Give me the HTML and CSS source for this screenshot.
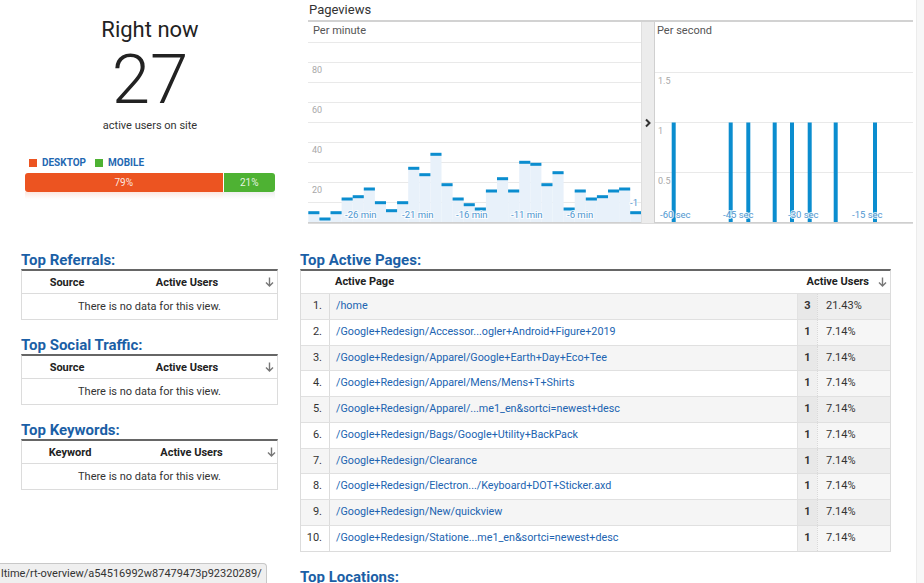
FILE: index.html
```html
<!DOCTYPE html>
<html lang="en">
<head>
<meta charset="utf-8">
<title>Real-Time Overview</title>
<link rel="stylesheet" href="styles.css">
</head>
<body>
<div class="app">
  <div class="main">
    <div class="top">
      <section class="now">
        <div class="now-title">Right now</div>
        <div class="now-count">27</div>
        <div class="now-sub">active users on site</div>
        <div class="legend">
          <span class="legend-item"><span class="sw sw-desktop"></span>DESKTOP</span>
          <span class="legend-item"><span class="sw sw-mobile"></span>MOBILE</span>
        </div>
        <div class="device-bar">
          <div class="seg seg-desktop">79%</div>
          <div class="seg seg-mobile">21%</div>
        </div>
        <div class="device-reflect">
          <div class="ref ref-desktop"></div>
          <div class="ref ref-mobile"></div>
        </div>
      </section>

      <section class="chart">
        <div class="chart-title">Pageviews</div>
        <div class="chart-frame">
          <div class="pm">
            <svg width="333" height="201" viewBox="0 0 333 201">
              <text class="plabel" x="5" y="12">Per minute</text>
              <g class="grid">
                <line x1="0" x2="333" y1="20.5" y2="20.5"/>
                <line x1="0" x2="333" y1="40.5" y2="40.5"/>
                <line x1="0" x2="333" y1="60.5" y2="60.5"/>
                <line x1="0" x2="333" y1="80.5" y2="80.5"/>
                <line x1="0" x2="333" y1="100.5" y2="100.5"/>
                <line x1="0" x2="333" y1="120.5" y2="120.5"/>
                <line x1="0" x2="333" y1="140.5" y2="140.5"/>
                <line x1="0" x2="333" y1="160.5" y2="160.5"/>
                <line x1="0" x2="333" y1="180.5" y2="180.5"/>
              </g>
              <text class="ylab" x="4" y="51">80</text>
              <text class="ylab" x="4" y="91">60</text>
              <text class="ylab" x="4" y="131">40</text>
              <text class="ylab" x="4" y="171">20</text>
              <g class="area">
                <rect x="0.3" y="190.7" width="11.1" height="9.8"/>
                <rect x="11.4" y="197" width="11.1" height="3.5"/>
                <rect x="22.5" y="190.7" width="11.1" height="9.8"/>
                <rect x="33.6" y="177" width="11.1" height="23.5"/>
                <rect x="44.7" y="174.7" width="11.1" height="25.8"/>
                <rect x="55.8" y="167" width="11.1" height="33.5"/>
                <rect x="66.9" y="180.7" width="11.1" height="19.8"/>
                <rect x="78" y="188.7" width="11.1" height="11.8"/>
                <rect x="89.1" y="180.7" width="11.1" height="19.8"/>
                <rect x="100.2" y="146.3" width="11.1" height="54.2"/>
                <rect x="111.3" y="152.7" width="11.1" height="47.8"/>
                <rect x="122.4" y="132.3" width="11.1" height="68.2"/>
                <rect x="133.5" y="162.7" width="11.1" height="37.8"/>
                <rect x="144.6" y="177" width="11.1" height="23.5"/>
                <rect x="155.7" y="182.7" width="11.1" height="17.8"/>
                <rect x="166.8" y="187" width="11.1" height="13.5"/>
                <rect x="177.9" y="169" width="11.1" height="31.5"/>
                <rect x="189" y="156.7" width="11.1" height="43.8"/>
                <rect x="200.1" y="169" width="11.1" height="31.5"/>
                <rect x="211.2" y="140.3" width="11.1" height="60.2"/>
                <rect x="222.3" y="142.3" width="11.1" height="58.2"/>
                <rect x="233.4" y="162.7" width="11.1" height="37.8"/>
                <rect x="244.5" y="150.7" width="11.1" height="49.8"/>
                <rect x="255.6" y="187" width="11.1" height="13.5"/>
                <rect x="266.7" y="169" width="11.1" height="31.5"/>
                <rect x="277.8" y="177" width="11.1" height="23.5"/>
                <rect x="288.9" y="174.7" width="11.1" height="25.8"/>
                <rect x="300" y="169" width="11.1" height="31.5"/>
                <rect x="311.1" y="167" width="11.1" height="33.5"/>
                <rect x="322.2" y="190.7" width="10.8" height="9.8"/>
              </g>
              <g class="tops">
                <rect x="0.3" y="189.2" width="11.1" height="3"/>
                <rect x="11.4" y="195.5" width="11.1" height="3"/>
                <rect x="22.5" y="189.2" width="11.1" height="3"/>
                <rect x="33.6" y="175.5" width="11.1" height="3"/>
                <rect x="44.7" y="173.2" width="11.1" height="3"/>
                <rect x="55.8" y="165.5" width="11.1" height="3"/>
                <rect x="66.9" y="179.2" width="11.1" height="3"/>
                <rect x="78" y="187.2" width="11.1" height="3"/>
                <rect x="89.1" y="179.2" width="11.1" height="3"/>
                <rect x="100.2" y="144.8" width="11.1" height="3"/>
                <rect x="111.3" y="151.2" width="11.1" height="3"/>
                <rect x="122.4" y="130.8" width="11.1" height="3"/>
                <rect x="133.5" y="161.2" width="11.1" height="3"/>
                <rect x="144.6" y="175.5" width="11.1" height="3"/>
                <rect x="155.7" y="181.2" width="11.1" height="3"/>
                <rect x="166.8" y="185.5" width="11.1" height="3"/>
                <rect x="177.9" y="167.5" width="11.1" height="3"/>
                <rect x="189" y="155.2" width="11.1" height="3"/>
                <rect x="200.1" y="167.5" width="11.1" height="3"/>
                <rect x="211.2" y="138.8" width="11.1" height="3"/>
                <rect x="222.3" y="140.8" width="11.1" height="3"/>
                <rect x="233.4" y="161.2" width="11.1" height="3"/>
                <rect x="244.5" y="149.2" width="11.1" height="3"/>
                <rect x="255.6" y="185.5" width="11.1" height="3"/>
                <rect x="266.7" y="167.5" width="11.1" height="3"/>
                <rect x="277.8" y="175.5" width="11.1" height="3"/>
                <rect x="288.9" y="173.2" width="11.1" height="3"/>
                <rect x="300" y="167.5" width="11.1" height="3"/>
                <rect x="311.1" y="165.5" width="11.1" height="3"/>
                <rect x="322.2" y="189.2" width="10.8" height="3"/>
              </g>
              <line class="axis" x1="0" x2="333" y1="200.5" y2="200.5"/>
              <text class="xlab" x="37" y="195.5">-26 min</text>
              <text class="xlab" x="94" y="195.5">-21 min</text>
              <text class="xlab" x="148" y="195.5">-16 min</text>
              <text class="xlab" x="203" y="195.5">-11 min</text>
              <text class="xlab" x="259" y="195.5">-6 min</text>
              <text class="xlab" x="322" y="184">-1</text>
            </svg>
          </div>
          <div class="divider">
            <svg class="chev" width="8" height="10" viewBox="0 0 8 10"><path d="M2 1.5 L5.5 5 L2 8.5"/></svg>
          </div>
          <div class="ps">
            <svg width="258" height="201" viewBox="0 0 258 201">
              <text class="plabel" x="2" y="12">Per second</text>
              <g class="grid">
                <line x1="0" x2="258" y1="50.5" y2="50.5"/>
                <line x1="0" x2="258" y1="100.5" y2="100.5"/>
                <line x1="0" x2="258" y1="150.5" y2="150.5"/>
              </g>
              <text class="ylab" x="3" y="62">1.5</text>
              <text class="ylab" x="3" y="112">1</text>
              <text class="ylab" x="3" y="162">0.5</text>
              <g class="spikes">
                <rect x="16.7" y="100.5" width="4" height="100"/>
                <rect x="73.7" y="100.5" width="4" height="100"/>
                <rect x="91.3" y="100.5" width="4" height="100"/>
                <rect x="117.7" y="100.5" width="4" height="100"/>
                <rect x="135" y="100.5" width="4" height="100"/>
                <rect x="152.7" y="100.5" width="4" height="100"/>
                <rect x="178.7" y="100.5" width="4" height="100"/>
                <rect x="218" y="100.5" width="4" height="100"/>
              </g>
              <line class="axis" x1="0" x2="258" y1="200.5" y2="200.5"/>
              <text class="xlab" x="5" y="195.5">-60 sec</text>
              <text class="xlab" x="68" y="195.5">-45 sec</text>
              <text class="xlab" x="133" y="195.5">-30 sec</text>
              <text class="xlab" x="197" y="195.5">-15 sec</text>
            </svg>
          </div>
        </div>
      </section>
    </div>

    <div class="bottom">
      <div class="left-col">
        <section class="block">
          <h2 class="block-title">Top Referrals:</h2>
          <div class="mini">
            <div class="mini-head">
              <span>Source</span><span>Active Users</span>
              <svg class="sort" width="9" height="10" viewBox="0 0 9 10"><path d="M4.5 0.5 V9 M1 5.5 L4.5 9 L8 5.5"/></svg>
            </div>
            <div class="mini-empty">There is no data for this view.</div>
          </div>
        </section>
        <section class="block">
          <h2 class="block-title">Top Social Traffic:</h2>
          <div class="mini">
            <div class="mini-head">
              <span>Source</span><span>Active Users</span>
              <svg class="sort" width="9" height="10" viewBox="0 0 9 10"><path d="M4.5 0.5 V9 M1 5.5 L4.5 9 L8 5.5"/></svg>
            </div>
            <div class="mini-empty">There is no data for this view.</div>
          </div>
        </section>
        <section class="block">
          <h2 class="block-title">Top Keywords:</h2>
          <div class="mini">
            <div class="mini-head mini-head-kw">
              <span>Keyword</span><span>Active Users</span>
              <svg class="sort" width="9" height="10" viewBox="0 0 9 10"><path d="M4.5 0.5 V9 M1 5.5 L4.5 9 L8 5.5"/></svg>
            </div>
            <div class="mini-empty">There is no data for this view.</div>
          </div>
        </section>
      </div>

      <div class="right-col">
        <section class="block">
          <h2 class="block-title">Top Active Pages:</h2>
          <div class="pages">
            <div class="prow phead">
              <span class="c-num"></span>
              <span class="c-page">Active Page</span>
              <span class="c-users">Active Users
                <svg class="sort" width="9" height="10" viewBox="0 0 9 10"><path d="M4.5 0.5 V9 M1 5.5 L4.5 9 L8 5.5"/></svg>
              </span>
            </div>
            <div class="prow odd"><span class="c-num">1.</span><a class="c-page" href="#">/home</a><span class="c-cnt">3</span><span class="c-pct">21.43%</span></div>
            <div class="prow"><span class="c-num">2.</span><a class="c-page" href="#">/Google+Redesign/Accessor...ogler+Android+Figure+2019</a><span class="c-cnt">1</span><span class="c-pct">7.14%</span></div>
            <div class="prow odd"><span class="c-num">3.</span><a class="c-page" href="#">/Google+Redesign/Apparel/Google+Earth+Day+Eco+Tee</a><span class="c-cnt">1</span><span class="c-pct">7.14%</span></div>
            <div class="prow"><span class="c-num">4.</span><a class="c-page" href="#">/Google+Redesign/Apparel/Mens/Mens+T+Shirts</a><span class="c-cnt">1</span><span class="c-pct">7.14%</span></div>
            <div class="prow odd"><span class="c-num">5.</span><a class="c-page" href="#">/Google+Redesign/Apparel/...me1_en&amp;sortci=newest+desc</a><span class="c-cnt">1</span><span class="c-pct">7.14%</span></div>
            <div class="prow"><span class="c-num">6.</span><a class="c-page" href="#">/Google+Redesign/Bags/Google+Utility+BackPack</a><span class="c-cnt">1</span><span class="c-pct">7.14%</span></div>
            <div class="prow odd"><span class="c-num">7.</span><a class="c-page" href="#">/Google+Redesign/Clearance</a><span class="c-cnt">1</span><span class="c-pct">7.14%</span></div>
            <div class="prow"><span class="c-num">8.</span><a class="c-page" href="#">/Google+Redesign/Electron.../Keyboard+DOT+Sticker.axd</a><span class="c-cnt">1</span><span class="c-pct">7.14%</span></div>
            <div class="prow odd"><span class="c-num">9.</span><a class="c-page" href="#">/Google+Redesign/New/quickview</a><span class="c-cnt">1</span><span class="c-pct">7.14%</span></div>
            <div class="prow"><span class="c-num">10.</span><a class="c-page" href="#">/Google+Redesign/Statione...me1_en&amp;sortci=newest+desc</a><span class="c-cnt">1</span><span class="c-pct">7.14%</span></div>
          </div>
        </section>
        <section class="block">
          <h2 class="block-title">Top Locations:</h2>
        </section>
      </div>
    </div>
  </div>
  <div class="rail"></div>
</div>
<div class="statusbar">ltime/rt-overview/a54516992w87479473p92320289/</div>
</body>
</html>
```

FILE: styles.css
```css
html, body {
  margin: 0;
  padding: 0;
}
body {
  font-family: Roboto, "Liberation Sans", Arial, sans-serif;
  color: #333;
  background: #fff;
  overflow: hidden;
}
.app {
  display: flex;
  min-height: 100vh;
}
.main {
  flex: 1;
  min-width: 0;
}
.rail {
  width: 7px;
  background: #f7f7f7;
  border-left: 1px solid #ececec;
}

/* ---------- top ---------- */
.top {
  display: flex;
  height: 252px;
}
.now {
  width: 300px;
  box-sizing: border-box;
  padding-top: 17px;
  text-align: center;
}
.now-title {
  font-size: 22px;
  line-height: 26px;
  color: #222;
}
.now-count {
  font-size: 69px;
  line-height: 70px;
  font-weight: 300;
  color: #222;
  margin-top: 2px;
}
.now-sub {
  font-size: 11px;
  line-height: 14px;
  margin-top: 4px;
  color: #333;
}
.legend {
  display: flex;
  align-items: center;
  margin: 24px 0 0 29px;
  font-size: 10px;
  line-height: 12px;
  font-weight: 700;
  color: #1f68b2;
}
.legend-item {
  display: flex;
  align-items: center;
  margin-right: 9px;
}
.sw {
  width: 8px;
  height: 8px;
  margin-right: 5px;
}
.sw-desktop { background: #ec5421; }
.sw-mobile { background: #4eb233; }

.device-bar {
  display: flex;
  width: 250px;
  height: 19px;
  margin: 4px 0 0 25px;
  border-radius: 3px;
  overflow: hidden;
  font-size: 10px;
  line-height: 19px;
  color: rgba(255, 255, 255, 0.88);
}
.seg-desktop {
  width: 79%;
  background: #ec5421;
  border-right: 1px solid #fff;
}
.seg-mobile {
  flex: 1;
  background: #4eb233;
}
.device-reflect {
  display: flex;
  width: 250px;
  height: 7px;
  margin-left: 25px;
}
.ref-desktop {
  width: 79%;
  background: linear-gradient(to bottom, rgba(236, 84, 33, 0.14), rgba(236, 84, 33, 0));
}
.ref-mobile {
  flex: 1;
  background: linear-gradient(to bottom, rgba(120, 120, 120, 0.12), rgba(120, 120, 120, 0));
}

/* ---------- chart ---------- */
.chart {
  width: 605px;
  margin-left: 8px;
}
.chart-title {
  font-size: 13px;
  line-height: 16px;
  padding: 2px 0 0 1px;
  margin-bottom: 2px;
  color: #333;
}
.chart-frame {
  display: flex;
  height: 201px;
  border-top: 2px solid #d2d2d2;
  border-bottom: 1px solid #dcdcdc;
}
.pm { width: 333px; }
.ps { width: 258px; }
.pm svg, .ps svg { display: block; }
.divider {
  width: 14px;
  box-sizing: border-box;
  background: #ececec;
  border-left: 1px solid #dedede;
  border-right: 1px solid #d0d0d0;
  display: flex;
  justify-content: center;
  padding-top: 96px;
}
.chev path {
  fill: none;
  stroke: #333;
  stroke-width: 2;
}
.plabel {
  font-family: Roboto, "Liberation Sans", sans-serif;
  font-size: 11px;
  fill: #555;
}
.grid line {
  stroke: #e9e9e9;
  stroke-width: 1;
}
.axis {
  stroke: #cfcfcf;
  stroke-width: 1;
}
.ylab {
  font-family: Roboto, "Liberation Sans", sans-serif;
  font-size: 9px;
  fill: #a8a8a8;
}
.area rect { fill: #e8f1fa; }
.tops rect { fill: #0b8dcf; }
.spikes rect { fill: #0b8dcf; }
.xlab {
  font-family: Roboto, "Liberation Sans", sans-serif;
  font-size: 9.5px;
  fill: #4f97d1;
  stroke: #ffffff;
  stroke-width: 2px;
  stroke-opacity: 0.8;
  paint-order: stroke;
}

/* ---------- bottom ---------- */
.bottom {
  display: flex;
}
.left-col {
  width: 257px;
  margin-left: 21px;
}
.right-col {
  width: 591px;
  margin-left: 22px;
}
.block + .block {
  margin-top: 17px;
}
.block-title {
  margin: 0;
  font-size: 15px;
  line-height: 17px;
  font-weight: 700;
  color: #1b5fa6;
}
.mini {
  border: 1px solid #dcdcdc;
  border-top: 2px solid #666;
}
.mini-head {
  display: grid;
  grid-template-columns: 90px 150px 1fr;
  align-items: center;
  height: 22px;
  border-bottom: 1px solid #dcdcdc;
  font-size: 11px;
  font-weight: 700;
  color: #222;
  text-align: center;
}
.mini-head-kw {
  grid-template-columns: 96px 147px 1fr;
}
.mini-empty {
  height: 25px;
  line-height: 25px;
  text-align: center;
  font-size: 11px;
  color: #333;
}
.sort {
  display: block;
  justify-self: center;
}
.sort path {
  fill: none;
  stroke: #777;
  stroke-width: 1.4;
}

.pages {
  border: 1px solid #dcdcdc;
  border-top: 2px solid #666;
  font-size: 11px;
}
.prow {
  display: grid;
  grid-template-columns: 29px 1fr 20px 73px;
  height: 24.75px;
  line-height: 24.75px;
  background: #fff;
}
.prow + .prow {
  border-top: 1px solid #e0e0e0;
}
.prow.odd {
  background: #f5f5f5;
}
.phead {
  height: 22px;
  line-height: 22px;
  font-weight: 700;
  color: #222;
}
.c-num {
  text-align: right;
  padding-right: 7px;
  border-right: 1px solid #dcdcdc;
  color: #333;
}
.phead .c-num {
  border-right: none;
}
.c-page {
  padding-left: 6px;
  white-space: nowrap;
  overflow: hidden;
}
a.c-page {
  color: #2164b1;
  font-size: 10.75px;
  text-decoration: none;
}
.phead .c-page {
  padding-left: 5px;
}
.c-users {
  grid-column: 3 / 5;
  display: flex;
  align-items: center;
  justify-content: flex-end;
  gap: 9px;
  padding-right: 3px;
}
.c-cnt {
  text-align: center;
  font-weight: 700;
  color: #333;
  background: #f0f0f0;
  border-left: 1px solid #e2e2e2;
}
.c-pct {
  padding-left: 8px;
  color: #333;
  background: #f6f6f6;
  border-left: 1px dotted #d8d8d8;
}
.odd .c-cnt { background: #e8e8e8; }
.odd .c-pct { background: #eeeeee; }

/* ---------- browser status bubble ---------- */
.statusbar {
  position: fixed;
  left: 0;
  bottom: 0;
  width: 265px;
  height: 19px;
  padding-left: 1px;
  background: #efefef;
  border-top: 1px solid #c8c8c8;
  border-right: 1px solid #c8c8c8;
  border-top-right-radius: 4px;
  font-size: 11px;
  line-height: 19px;
  color: #333;
  white-space: nowrap;
  overflow: hidden;
}
```
